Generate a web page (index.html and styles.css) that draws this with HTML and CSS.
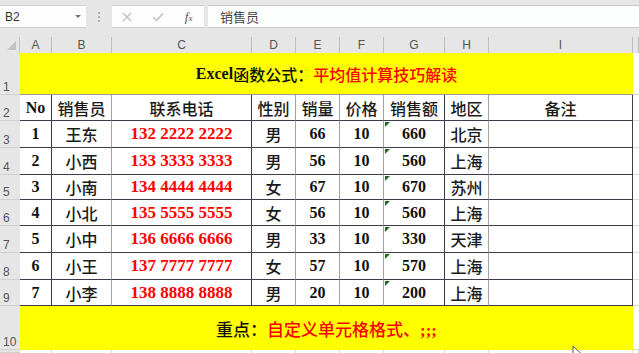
FILE: index.html
```html
<!DOCTYPE html>
<html lang="zh-CN">
<head>
    <meta charset="UTF-8">
    <title>Excel函数公式</title>
    <link rel="stylesheet" href="styles.css">
</head>
<body>
    <div class="toolbar">
        <div class="name-box">
            <span>B2</span>
            <span class="caret"></span>
        </div>
        <div class="dots"><span></span><span></span><span></span></div>
        <div class="fx-box">
            <svg width="10" height="10" viewBox="0 0 10 10"><path d="M1 1 L9 9 M9 1 L1 9" stroke="#bdbdbd" stroke-width="1.2" fill="none"/></svg>
            <svg width="12" height="10" viewBox="0 0 12 10"><path d="M1 5 L4.5 8.5 L11 1.5" stroke="#bdbdbd" stroke-width="1.3" fill="none"/></svg>
            <span class="fx">f<small>x</small></span>
        </div>
        <div class="formula">销售员</div>
    </div>

    <div class="sheet">
        <div class="corner"><span></span></div>
        <div class="col">A</div>
        <div class="col">B</div>
        <div class="col">C</div>
        <div class="col">D</div>
        <div class="col">E</div>
        <div class="col">F</div>
        <div class="col">G</div>
        <div class="col">H</div>
        <div class="col">I</div>
        <div class="col"></div>

        <div class="row-no">1</div>
        <div class="banner top"><b>Excel</b>函数公式：<span class="red">平均值计算技巧解读</span></div>
        <div class="blank"></div>

        <div class="row-no">2</div>
        <div class="cell">No</div>
        <div class="cell soft zh">销售员</div>
        <div class="cell zh">联系电话</div>
        <div class="cell soft zh">性别</div>
        <div class="cell soft zh">销量</div>
        <div class="cell soft zh">价格</div>
        <div class="cell zh">销售额</div>
        <div class="cell soft zh">地区</div>
        <div class="cell zh">备注</div>
        <div class="blank"></div>

        <div class="row-no">3</div>
        <div class="cell">1</div>
        <div class="cell soft zh">王东</div>
        <div class="cell phone">132 2222 2222</div>
        <div class="cell soft zh">男</div>
        <div class="cell soft">66</div>
        <div class="cell soft">10</div>
        <div class="cell mark">660</div>
        <div class="cell soft zh">北京</div>
        <div class="cell"></div>
        <div class="blank"></div>

        <div class="row-no">4</div>
        <div class="cell">2</div>
        <div class="cell soft zh">小西</div>
        <div class="cell phone">133 3333 3333</div>
        <div class="cell soft zh">男</div>
        <div class="cell soft">56</div>
        <div class="cell soft">10</div>
        <div class="cell mark">560</div>
        <div class="cell soft zh">上海</div>
        <div class="cell"></div>
        <div class="blank"></div>

        <div class="row-no">5</div>
        <div class="cell">3</div>
        <div class="cell soft zh">小南</div>
        <div class="cell phone">134 4444 4444</div>
        <div class="cell soft zh">女</div>
        <div class="cell soft">67</div>
        <div class="cell soft">10</div>
        <div class="cell mark">670</div>
        <div class="cell soft zh">苏州</div>
        <div class="cell"></div>
        <div class="blank"></div>

        <div class="row-no">6</div>
        <div class="cell">4</div>
        <div class="cell soft zh">小北</div>
        <div class="cell phone">135 5555 5555</div>
        <div class="cell soft zh">女</div>
        <div class="cell soft">56</div>
        <div class="cell soft">10</div>
        <div class="cell mark">560</div>
        <div class="cell soft zh">上海</div>
        <div class="cell"></div>
        <div class="blank"></div>

        <div class="row-no">7</div>
        <div class="cell">5</div>
        <div class="cell soft zh">小中</div>
        <div class="cell phone">136 6666 6666</div>
        <div class="cell soft zh">男</div>
        <div class="cell soft">33</div>
        <div class="cell soft">10</div>
        <div class="cell mark">330</div>
        <div class="cell soft zh">天津</div>
        <div class="cell"></div>
        <div class="blank"></div>

        <div class="row-no">8</div>
        <div class="cell">6</div>
        <div class="cell soft zh">小王</div>
        <div class="cell phone">137 7777 7777</div>
        <div class="cell soft zh">女</div>
        <div class="cell soft">57</div>
        <div class="cell soft">10</div>
        <div class="cell mark">570</div>
        <div class="cell soft zh">上海</div>
        <div class="cell"></div>
        <div class="blank"></div>

        <div class="row-no">9</div>
        <div class="cell">7</div>
        <div class="cell soft zh">小李</div>
        <div class="cell phone">138 8888 8888</div>
        <div class="cell soft zh">男</div>
        <div class="cell soft">20</div>
        <div class="cell soft">10</div>
        <div class="cell mark">200</div>
        <div class="cell soft zh">上海</div>
        <div class="cell"></div>
        <div class="blank"></div>

        <div class="row-no">10</div>
        <div class="banner bottom">重点：<span class="red">自定义单元格格式、<b>;;;</b></span></div>
        <div class="blank"></div>

        <div class="row-no"></div>
        <div class="empty"></div>
        <div class="empty"></div>
        <div class="empty"></div>
        <div class="empty"></div>
        <div class="empty"></div>
        <div class="empty"></div>
        <div class="empty"></div>
        <div class="empty"></div>
        <div class="empty"></div>
        <div class="empty"></div>
    </div>

    <svg class="pointer" width="12" height="19" viewBox="0 0 12 19"><path d="M1 1 L1 15 L4.5 11.5 L7 17.5 L9 16.5 L6.5 10.5 L11 10.5 Z" fill="#fff" stroke="#555" stroke-width="1"/></svg>
</body>
</html>
```

FILE: styles.css
```css
* {
    box-sizing: border-box;
}

body {
    margin: 0;
    width: 639px;
    height: 353px;
    overflow: hidden;
    position: relative;
    background: #e6e6e6;
    font-family: "Liberation Sans", "Noto Sans CJK SC", sans-serif;
}

/* formula bar */
.toolbar {
    display: flex;
    height: 37px;
    padding: 5px 0 9px;
}

.name-box {
    width: 86px;
    background: #fdfdfd;
    border-top: 1px solid #d2d2d2;
    border-bottom: 1px solid #d2d2d2;
    display: flex;
    align-items: center;
    justify-content: space-between;
    padding: 0 5px 0 5px;
    font-size: 12px;
    color: #333;
}

.caret {
    width: 0;
    height: 0;
    border-left: 3px solid transparent;
    border-right: 3px solid transparent;
    border-top: 3px solid #777;
}

.dots {
    width: 26px;
    display: flex;
    flex-direction: column;
    align-items: center;
    justify-content: center;
    gap: 2px;
}

.dots span {
    width: 2px;
    height: 2px;
    background: #b0b0b0;
}

.fx-box {
    width: 92px;
    background: #fdfdfd;
    border-top: 1px solid #d2d2d2;
    border-bottom: 1px solid #d2d2d2;
    display: grid;
    grid-template-columns: repeat(3, 1fr);
    align-items: center;
    justify-items: center;
}

.fx {
    font-family: "Liberation Serif", serif;
    font-style: italic;
    font-size: 13px;
    color: #555;
}

.fx small {
    font-size: 9px;
}

.formula {
    flex: 1;
    margin-left: 4px;
    background: #fdfefe;
    border-top: 1px solid #c8c8c8;
    border-bottom: 1px solid #c8c8c8;
    display: flex;
    align-items: center;
    padding-left: 12px;
    font-size: 13px;
    color: #444;
}

/* sheet */
.sheet {
    display: grid;
    grid-template-columns: 20px 32px 60px 140px 44px 44px 44px 61px 44px 144px 6px;
    grid-template-rows: 16px 42px 26px 27px 27px 25px 26px 27px 27px 26px 44px 3px;
}

.corner {
    display: flex;
    align-items: flex-end;
    justify-content: flex-end;
    padding: 0 3px 3px 0;
    border-right: 1px solid #c4c4c4;
}

.corner span {
    width: 0;
    height: 0;
    border-left: 9px solid transparent;
    border-bottom: 9px solid #c2c2c2;
}

.col {
    border-right: 1px solid #bdbdbd;
    display: flex;
    align-items: center;
    justify-content: center;
    font-size: 12px;
    color: #555;
}

.row-no {
    border-bottom: 1px solid #d0d0d0;
    display: flex;
    align-items: flex-end;
    padding: 0 0 0 3px;
    font-size: 12px;
    color: #555;
}

.banner {
    grid-column: span 9;
    background: #ffff00;
    display: flex;
    align-items: center;
    justify-content: center;
    font-family: "Liberation Serif", "Noto Sans CJK SC", serif;
    font-weight: 500;
    font-size: 16px;
    color: #111;
}

.banner b {
    font-weight: bold;
}

.banner.top {
    border-bottom: 1px solid #9a9a9a;
}

.banner.bottom {
    font-size: 17px;
}

.red {
    color: #ff0000;
}

.blank {
    background: #fff;
    border-bottom: 1px solid #dadada;
}

.cell {
    position: relative;
    background: #fff;
    border-right: 1px solid #3f3a4d;
    border-bottom: 1px solid #3f3a4d;
    display: flex;
    align-items: center;
    justify-content: center;
    font-family: "Liberation Serif", "Noto Sans CJK SC", serif;
    font-weight: bold;
    font-size: 16px;
    color: #111;
}

.cell.zh {
    font-weight: 500;
    color: #1a1a1a;
}

.cell.soft {
    border-right-color: #a2a2a2;
}

.cell.phone {
    color: #ff0000;
    font-size: 17px;
}

.cell.mark::before {
    content: "";
    position: absolute;
    left: 1px;
    top: 1px;
    border-top: 5px solid #1d6b21;
    border-right: 5px solid transparent;
}

.empty {
    background: #fff;
    border-right: 1px solid #dadada;
}

.pointer {
    position: absolute;
    left: 572px;
    top: 345px;
}
```
